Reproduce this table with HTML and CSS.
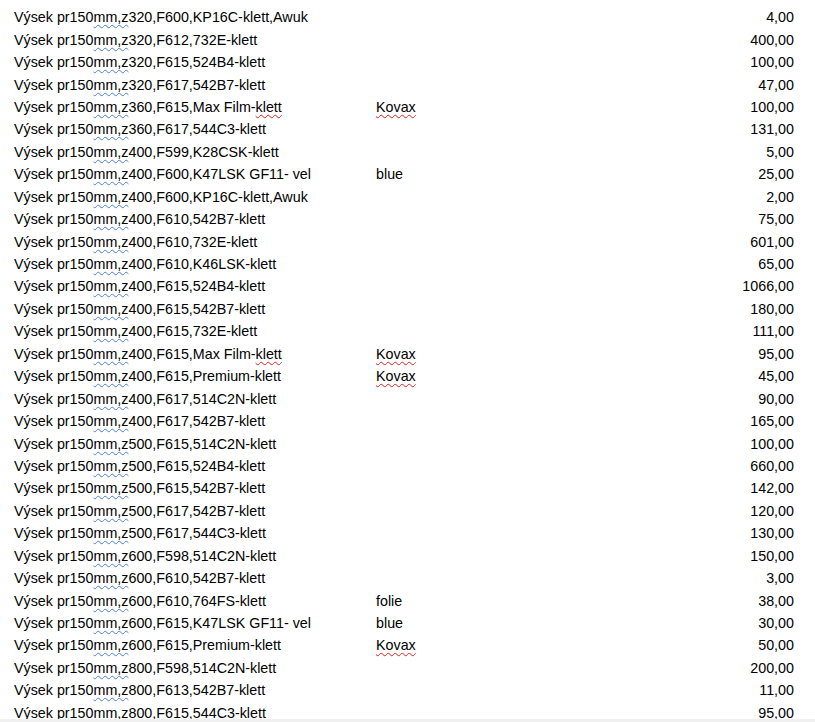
FILE: index.html
```html
<!DOCTYPE html>
<html lang="cs">
<head>
<meta charset="utf-8">
<title>Výsek</title>
<link rel="stylesheet" href="styles.css">
</head>
<body>
<div class="page">
  <div class="sheet">
    <div class="table">
      <div class="row"><span class="c1">Výsek pr150<span class="gr">mm,z</span>320,F600,KP16C-klett,Awuk</span><span class="c2"></span><span class="c3">4,00</span></div>
      <div class="row"><span class="c1">Výsek pr150<span class="gr">mm,z</span>320,F612,732E-klett</span><span class="c2"></span><span class="c3">400,00</span></div>
      <div class="row"><span class="c1">Výsek pr150<span class="gr">mm,z</span>320,F615,524B4-klett</span><span class="c2"></span><span class="c3">100,00</span></div>
      <div class="row"><span class="c1">Výsek pr150<span class="gr">mm,z</span>320,F617,542B7-klett</span><span class="c2"></span><span class="c3">47,00</span></div>
      <div class="row"><span class="c1">Výsek pr150<span class="gr">mm,z</span>360,F615,Max Film-<span class="sp">klett</span></span><span class="c2"><span class="sp">Kovax</span></span><span class="c3">100,00</span></div>
      <div class="row"><span class="c1">Výsek pr150<span class="gr">mm,z</span>360,F617,544C3-klett</span><span class="c2"></span><span class="c3">131,00</span></div>
      <div class="row"><span class="c1">Výsek pr150<span class="gr">mm,z</span>400,F599,K28CSK-klett</span><span class="c2"></span><span class="c3">5,00</span></div>
      <div class="row"><span class="c1">Výsek pr150<span class="gr">mm,z</span>400,F600,K47LSK GF11- vel</span><span class="c2">blue</span><span class="c3">25,00</span></div>
      <div class="row"><span class="c1">Výsek pr150<span class="gr">mm,z</span>400,F600,KP16C-klett,Awuk</span><span class="c2"></span><span class="c3">2,00</span></div>
      <div class="row"><span class="c1">Výsek pr150<span class="gr">mm,z</span>400,F610,542B7-klett</span><span class="c2"></span><span class="c3">75,00</span></div>
      <div class="row"><span class="c1">Výsek pr150<span class="gr">mm,z</span>400,F610,732E-klett</span><span class="c2"></span><span class="c3">601,00</span></div>
      <div class="row"><span class="c1">Výsek pr150<span class="gr">mm,z</span>400,F610,K46LSK-klett</span><span class="c2"></span><span class="c3">65,00</span></div>
      <div class="row"><span class="c1">Výsek pr150<span class="gr">mm,z</span>400,F615,524B4-klett</span><span class="c2"></span><span class="c3">1066,00</span></div>
      <div class="row"><span class="c1">Výsek pr150<span class="gr">mm,z</span>400,F615,542B7-klett</span><span class="c2"></span><span class="c3">180,00</span></div>
      <div class="row"><span class="c1">Výsek pr150<span class="gr">mm,z</span>400,F615,732E-klett</span><span class="c2"></span><span class="c3">111,00</span></div>
      <div class="row"><span class="c1">Výsek pr150<span class="gr">mm,z</span>400,F615,Max Film-<span class="sp">klett</span></span><span class="c2"><span class="sp">Kovax</span></span><span class="c3">95,00</span></div>
      <div class="row"><span class="c1">Výsek pr150<span class="gr">mm,z</span>400,F615,Premium-klett</span><span class="c2"><span class="sp">Kovax</span></span><span class="c3">45,00</span></div>
      <div class="row"><span class="c1">Výsek pr150<span class="gr">mm,z</span>400,F617,514C2N-klett</span><span class="c2"></span><span class="c3">90,00</span></div>
      <div class="row"><span class="c1">Výsek pr150<span class="gr">mm,z</span>400,F617,542B7-klett</span><span class="c2"></span><span class="c3">165,00</span></div>
      <div class="row"><span class="c1">Výsek pr150<span class="gr">mm,z</span>500,F615,514C2N-klett</span><span class="c2"></span><span class="c3">100,00</span></div>
      <div class="row"><span class="c1">Výsek pr150<span class="gr">mm,z</span>500,F615,524B4-klett</span><span class="c2"></span><span class="c3">660,00</span></div>
      <div class="row"><span class="c1">Výsek pr150<span class="gr">mm,z</span>500,F615,542B7-klett</span><span class="c2"></span><span class="c3">142,00</span></div>
      <div class="row"><span class="c1">Výsek pr150<span class="gr">mm,z</span>500,F617,542B7-klett</span><span class="c2"></span><span class="c3">120,00</span></div>
      <div class="row"><span class="c1">Výsek pr150<span class="gr">mm,z</span>500,F617,544C3-klett</span><span class="c2"></span><span class="c3">130,00</span></div>
      <div class="row"><span class="c1">Výsek pr150<span class="gr">mm,z</span>600,F598,514C2N-klett</span><span class="c2"></span><span class="c3">150,00</span></div>
      <div class="row"><span class="c1">Výsek pr150<span class="gr">mm,z</span>600,F610,542B7-klett</span><span class="c2"></span><span class="c3">3,00</span></div>
      <div class="row"><span class="c1">Výsek pr150<span class="gr">mm,z</span>600,F610,764FS-klett</span><span class="c2">folie</span><span class="c3">38,00</span></div>
      <div class="row"><span class="c1">Výsek pr150<span class="gr">mm,z</span>600,F615,K47LSK GF11- vel</span><span class="c2">blue</span><span class="c3">30,00</span></div>
      <div class="row"><span class="c1">Výsek pr150<span class="gr">mm,z</span>600,F615,Premium-klett</span><span class="c2"><span class="sp">Kovax</span></span><span class="c3">50,00</span></div>
      <div class="row"><span class="c1">Výsek pr150<span class="gr">mm,z</span>800,F598,514C2N-klett</span><span class="c2"></span><span class="c3">200,00</span></div>
      <div class="row"><span class="c1">Výsek pr150<span class="gr">mm,z</span>800,F613,542B7-klett</span><span class="c2"></span><span class="c3">11,00</span></div>
      <div class="row"><span class="c1">Výsek pr150<span class="gr">mm,z</span>800,F615,544C3-klett</span><span class="c2"></span><span class="c3">95,00</span></div>
    </div>
  </div>
  <div class="strip"></div>
</div>
</body>
</html>
```
FILE: styles.css
```css
html, body {
  margin: 0;
  padding: 0;
  background: #ffffff;
}
.page {
  display: flex;
  flex-direction: column;
  width: 815px;
  height: 722px;
  overflow: hidden;
}
.sheet {
  flex: 1;
  overflow: hidden;
  padding: 6px 21px 0 14px;
}
.table {
  display: grid;
  grid-auto-rows: 22.45px;
  font-family: "Liberation Sans", Arial, sans-serif;
  font-size: 14.3px;
  color: #000000;
}
.row {
  display: grid;
  grid-template-columns: 362px 1fr 120px;
  align-items: center;
  white-space: nowrap;
}
.c3 {
  text-align: right;
}
.gr {
  text-decoration: underline wavy #4a7fd6;
  text-decoration-thickness: 1px;
  text-underline-offset: 2px;
}
.sp {
  text-decoration: underline wavy #e02020;
  text-decoration-thickness: 1px;
  text-underline-offset: 2px;
}
.strip {
  height: 3px;
  flex: none;
  background: #f0f0f0;
}
```
